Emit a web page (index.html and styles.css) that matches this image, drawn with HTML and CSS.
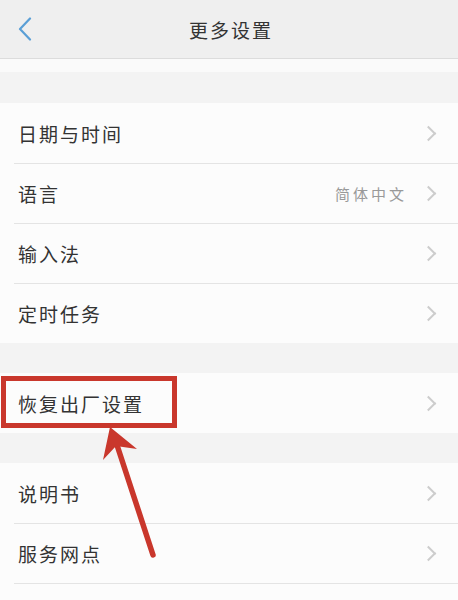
FILE: index.html
```html
<!DOCTYPE html>
<html lang="zh-CN">
<head>
  <meta charset="UTF-8" />
  <meta name="viewport" content="width=device-width, initial-scale=1.0"/>
  <title>更多设置</title>
  <link rel="stylesheet" href="styles.css">
</head>
<body>

  <div class="header">
    <svg class="back" width="14" height="24" viewBox="0 0 14 24">
      <path d="M12 1.5 L2 12 L12 22.5" fill="none" stroke="#5a9fd6" stroke-width="2.2" stroke-linecap="round" stroke-linejoin="round"/>
    </svg>
    <h1 class="title">更多设置</h1>
  </div>

  <div class="gap gap-top"></div>

  <div class="group">
    <div class="row"><span class="label">日期与时间</span><span class="arrow"></span></div>
    <div class="row"><span class="label">语言</span><span class="value">简体中文</span><span class="arrow"></span></div>
    <div class="row"><span class="label">输入法</span><span class="arrow"></span></div>
    <div class="row"><span class="label">定时任务</span><span class="arrow"></span></div>
  </div>

  <div class="gap"></div>

  <div class="group">
    <div class="row"><span class="label">恢复出厂设置</span><span class="arrow"></span></div>
  </div>

  <div class="gap"></div>

  <div class="group">
    <div class="row"><span class="label">说明书</span><span class="arrow"></span></div>
    <div class="row"><span class="label">服务网点</span><span class="arrow"></span></div>
    <div class="row"></div>
  </div>

  <!-- red annotation drawn over the list -->
  <svg class="mark" width="458" height="600" viewBox="0 0 458 600">
    <rect x="3.5" y="378.5" width="171" height="47" fill="none" stroke="#c9372c" stroke-width="5"/>
    <line x1="153" y1="555" x2="116" y2="442" stroke="#c9372c" stroke-width="5.5" stroke-linecap="round"/>
    <path d="M110 427 L103 460 L116 446 L137 449 Z" fill="#c9372c"/>
  </svg>

</body>
</html>
```

FILE: styles.css
```css
body {
  margin: 0;
  background: #f3f3f3;
  font-family: "Noto Sans CJK SC", "Noto Sans", sans-serif;
  color: #333;
  position: relative;
  overflow: hidden;
  height: 600px;
}

.header {
  height: 58px;
  background: #efefef;
  border-bottom: 1px solid #dcdcdc;
  display: flex;
  align-items: center;
  justify-content: center;
  position: relative;
}

.back {
  position: absolute;
  left: 18px;
  top: 17px;
}

.title {
  margin: 0 0 0 4px;
  font-size: 19px;
  font-weight: normal;
  letter-spacing: 2px;
  color: #333;
}

.gap {
  height: 30px;
}

.gap-top {
  height: 44px;
  background: linear-gradient(to bottom, #fafafa 0, #fafafa 13px, #f3f3f3 13px);
}

.group {
  background: #fcfcfc;
}

.row {
  height: 60px;
  display: flex;
  align-items: center;
  padding: 0 20px 0 18px;
  position: relative;
}

.row + .row::before {
  content: "";
  position: absolute;
  left: 14px;
  right: 0;
  top: 0;
  border-top: 1px solid #e4e4e4;
}

.label {
  flex: 1;
  font-size: 19px;
  letter-spacing: 2px;
  color: #333;
}

.value {
  font-size: 15px;
  letter-spacing: 3px;
  color: #999;
  margin-right: 16px;
}

.arrow {
  width: 9px;
  height: 9px;
  border-top: 2px solid #cdcdcd;
  border-right: 2px solid #cdcdcd;
  transform: rotate(45deg);
  margin-right: 4px;
}

.mark {
  position: absolute;
  left: 0;
  top: 0;
  pointer-events: none;
}
```
